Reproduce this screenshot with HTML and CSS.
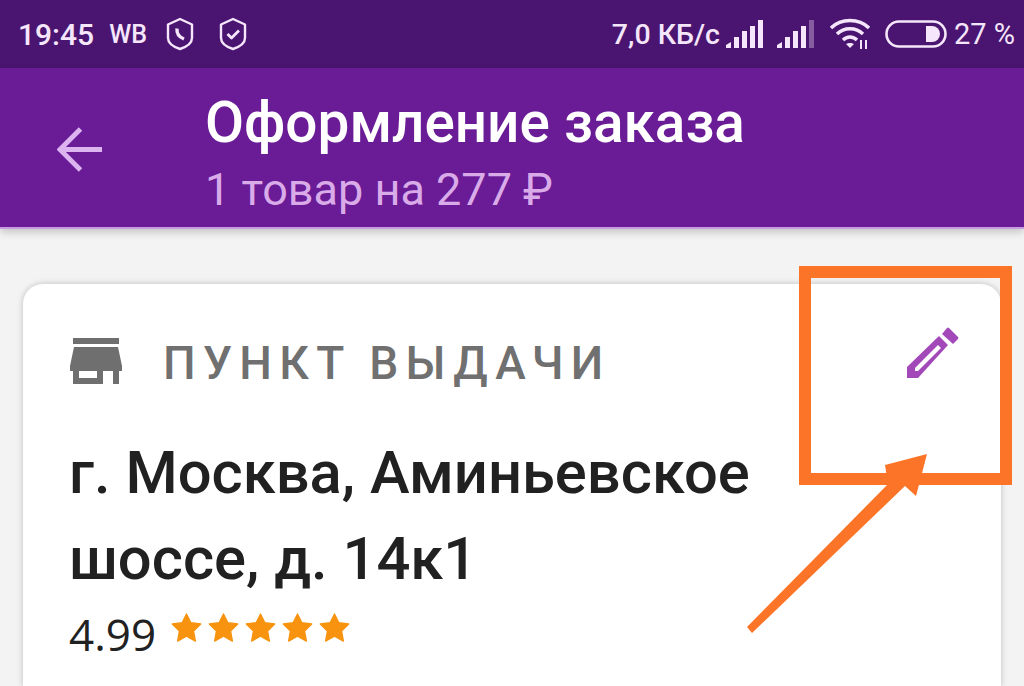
FILE: index.html
```html
<!DOCTYPE html>
<html lang="ru">
<head>
  <meta charset="UTF-8" />
  <meta name="viewport" content="width=device-width, initial-scale=1" />
  <title>Оформление заказа</title>
  <link rel="stylesheet" href="styles.css">
</head>
<body>

<div class="status-bar">
  <div class="status-left">
    <span class="clock">19:45</span>
    <span class="carrier">WB</span>
    <svg class="shield" viewBox="0 0 28 34" fill="none" stroke="currentColor" stroke-width="2.4" stroke-linejoin="round">
      <path d="M14 2 L26 7.500 V21 C26 26 20 30 14 32 C8 30 2 26 2 21 V7.500 Z" />
      <path d="M11 11.500 C10.500 16.500 13 20 18 22" stroke-width="3.400" />
    </svg>
    <svg class="shield" viewBox="0 0 28 34" fill="none" stroke="currentColor" stroke-width="2.4" stroke-linejoin="round">
      <path d="M14 2 L26 7.500 V21 C26 26 20 30 14 32 C8 30 2 26 2 21 V7.500 Z" />
      <path d="M8.500 17 L12.500 21 L20 13.500" stroke-width="2.800" />
    </svg>
  </div>
  <div class="status-right">
    <span class="speed">7,0 КБ/с</span>
    <svg class="signal" viewBox="0 0 39 28" fill="currentColor">
      <path d="M0 28 V25 L5 22 V28 Z" />
      <rect x="8" y="17" width="5" height="11" />
      <rect x="16" y="11" width="5" height="17" />
      <rect x="24" y="6" width="5" height="22" />
      <rect x="32" y="0" width="5" height="28" />
    </svg>
    <svg class="signal" viewBox="0 0 39 28" fill="currentColor">
      <path d="M0 28 V25 L5 22 V28 Z" />
      <rect x="8" y="17" width="5" height="11" />
      <rect x="16" y="11" width="5" height="17" />
      <rect x="24" y="6" width="5" height="22" />
      <rect x="32" y="0" width="5" height="28" opacity="0.35" />
    </svg>
    <svg class="wifi" viewBox="0 0 40 32" fill="none" stroke="currentColor" stroke-width="3.400">
      <path d="M1 10 C11 0 29 0 39 10" />
      <path d="M7 16 C14 9 26 9 33 16" />
      <path d="M13 22 C17 18 23 18 27 22" />
      <path d="M20 30 L16 26 C18 24.500 22 24.500 24 26 Z" fill="currentColor" stroke="none" />
      <path d="M31 22 V31 M36 22 V31" stroke-width="2" />
    </svg>
    <svg class="battery" viewBox="0 0 62 28" fill="none" stroke="currentColor" stroke-width="2.600">
      <rect x="1.500" y="1.500" width="59" height="25" rx="12.500" />
      <path d="M41 6 H47 A8 8 0 0 1 47 22 H41 Z" fill="currentColor" stroke="none" />
    </svg>
    <span class="percent">27 %</span>
  </div>
</div>

<div class="toolbar">
  <svg class="back" viewBox="0 0 48 48" fill="none" stroke="currentColor" stroke-width="5">
    <path d="M46 24 H4" />
    <path d="M24 3 L3 24 L24 45" />
  </svg>
  <div class="toolbar-text">
    <div class="toolbar-title">Оформление заказа</div>
    <div class="toolbar-sub">1 товар на 277 ₽</div>
  </div>
</div>

<div class="content">
  <div class="card">
    <div class="card-head">
      <svg class="store" viewBox="0 0 52 46" fill="currentColor">
        <rect x="3" y="0" width="46" height="6" />
        <path d="M4 9 H48 L52 28 V33 H49 V46 H43 V33 H33 V46 H3 V33 H0 V28 Z M9 33 V40 H27 V33 Z" fill-rule="evenodd" />
      </svg>
      <span class="card-label">ПУНКТ ВЫДАЧИ</span>
      <svg class="edit" viewBox="0 0 52 52" fill="currentColor">
        <path d="M40 1 Q41 0 42 1 L51 10 Q52 11 51 12 L46 17 L35 7 Z" />
        <path fill-rule="evenodd" d="M32 9 L41 18 L11 51 H0 V40 Z M31 18 L8 41 V44 H11 L34 21 Z" />
      </svg>
    </div>
    <div class="address">г. Москва, Аминьевское шоссе, д. 14к1</div>
    <div class="rating">
      <span class="rating-num">4.99</span>
      <span class="stars">
        <svg class="star" viewBox="0 0 24 24"><path d="M12 1.500 L15.400 8.300 L23 9.300 L17.500 14.800 L18.900 22.500 L12 18.800 L5.100 22.500 L6.500 14.800 L1 9.300 L8.600 8.300 Z" /></svg>
        <svg class="star" viewBox="0 0 24 24"><path d="M12 1.500 L15.400 8.300 L23 9.300 L17.500 14.800 L18.900 22.500 L12 18.800 L5.100 22.500 L6.500 14.800 L1 9.300 L8.600 8.300 Z" /></svg>
        <svg class="star" viewBox="0 0 24 24"><path d="M12 1.500 L15.400 8.300 L23 9.300 L17.500 14.800 L18.900 22.500 L12 18.800 L5.100 22.500 L6.500 14.800 L1 9.300 L8.600 8.300 Z" /></svg>
        <svg class="star" viewBox="0 0 24 24"><path d="M12 1.500 L15.400 8.300 L23 9.300 L17.500 14.800 L18.900 22.500 L12 18.800 L5.100 22.500 L6.500 14.800 L1 9.300 L8.600 8.300 Z" /></svg>
        <svg class="star" viewBox="0 0 24 24"><path d="M12 1.500 L15.400 8.300 L23 9.300 L17.500 14.800 L18.900 22.500 L12 18.800 L5.100 22.500 L6.500 14.800 L1 9.300 L8.600 8.300 Z" /></svg>
      </span>
    </div>
  </div>
</div>

<!-- annotation drawn on top of the screenshot -->
<svg class="annotation" viewBox="0 0 1024 686">
  <rect x="805" y="272" width="201" height="207" fill="none" stroke="#fb7427" stroke-width="12" />
  <path fill="#fb7427" d="M927 454 L916 496 L905 486 L752 633 L747 627 L888 484 L885 465 Z" />
</svg>

</body>
</html>
```

FILE: styles.css
```css
html, body {
  margin: 0;
  height: 686px;
  overflow: hidden;
}

body {
  position: relative;
  background: #f3f3f3;
  font-family: Roboto, "Liberation Sans", sans-serif;
  color: #212121;
}

.status-bar {
  height: 68px;
  background: #4a1570;
  color: #f5e6fb;
  display: flex;
  align-items: center;
  justify-content: space-between;
  padding: 0 9px 0 18px;
  box-sizing: border-box;
}

.status-left, .status-right {
  display: flex;
  align-items: center;
}

.clock {
  font-size: 30px;
  font-weight: 500;
}

.carrier {
  font-size: 25px;
  font-weight: 500;
  margin-left: 15px;
}

.shield {
  width: 28px;
  height: 34px;
  margin-left: 19px;
  flex: none;
}

.shield + .shield {
  margin-left: 25px;
}

.speed {
  font-size: 28.500px;
  font-weight: 500;
}

.signal {
  width: 39px;
  height: 28px;
  margin-left: 6px;
}

.signal + .signal {
  margin-left: 12px;
}

.wifi {
  width: 40px;
  height: 32px;
  margin-left: 14px;
}

.battery {
  width: 62px;
  height: 28px;
  margin-left: 15px;
}

.percent {
  font-size: 29px;
  margin-left: 7px;
}

.toolbar {
  height: 161px;
  background: #6a1b96;
  border-bottom: 2px solid #c79be0;
  box-sizing: border-box;
  box-shadow: 0 3px 8px rgba(0, 0, 0, 0.2);
  display: flex;
  align-items: flex-start;
  padding: 0 0 0 57px;
  position: relative;
}

.back {
  width: 47px;
  height: 47px;
  color: #dcb4f0;
  margin-top: 58px;
  flex: none;
}

.toolbar-text {
  margin-left: 101px;
  margin-top: 22px;
}

.toolbar-title {
  font-size: 56.700px;
  font-weight: 500;
  line-height: 66px;
  color: #fff;
  white-space: nowrap;
}

.toolbar-sub {
  font-size: 45px;
  line-height: 68px;
  color: #d9ace9;
  white-space: nowrap;
}

.content {
  padding: 55px 23px 0 23px;
}

.card {
  background: #fff;
  border-radius: 20px 20px 0 0;
  box-shadow: 0 0 6px rgba(0, 0, 0, 0.22);
  height: 402px;
  padding: 51px 47px 0 46px;
  box-sizing: border-box;
}

.card-head {
  display: flex;
  align-items: center;
  height: 56px;
}

.store {
  width: 52px;
  height: 46px;
  color: #6f6f6f;
  flex: none;
  margin-bottom: 5px;
  margin-left: 1px;
}

.card-label {
  font-size: 46px;
  font-weight: 500;
  letter-spacing: 7.300px;
  color: #707070;
  margin-left: 41px;
  flex: 1;
  white-space: nowrap;
}

.edit {
  width: 52px;
  height: 52px;
  color: #a348b8;
  flex: none;
  margin-right: -5px;
  margin-bottom: 21px;
}

.address {
  width: 720px;
  font-size: 59.700px;
  font-weight: 500;
  line-height: 86px;
  margin-top: 39px;
}

.rating {
  display: flex;
  align-items: flex-start;
  margin-top: 7px;
}

.rating-num {
  font-size: 44px;
  line-height: 50px;
  font-family: "Open Sans", Roboto, sans-serif;
}

.stars {
  display: flex;
  gap: 6px;
  margin-left: 15px;
  margin-top: 3px;
}

.star {
  width: 31px;
  height: 31px;
  fill: #f7930e;
  stroke: #f7930e;
  stroke-width: 1;
  stroke-linejoin: round;
}

.annotation {
  position: absolute;
  left: 0;
  top: 0;
  width: 1024px;
  height: 686px;
}
```
